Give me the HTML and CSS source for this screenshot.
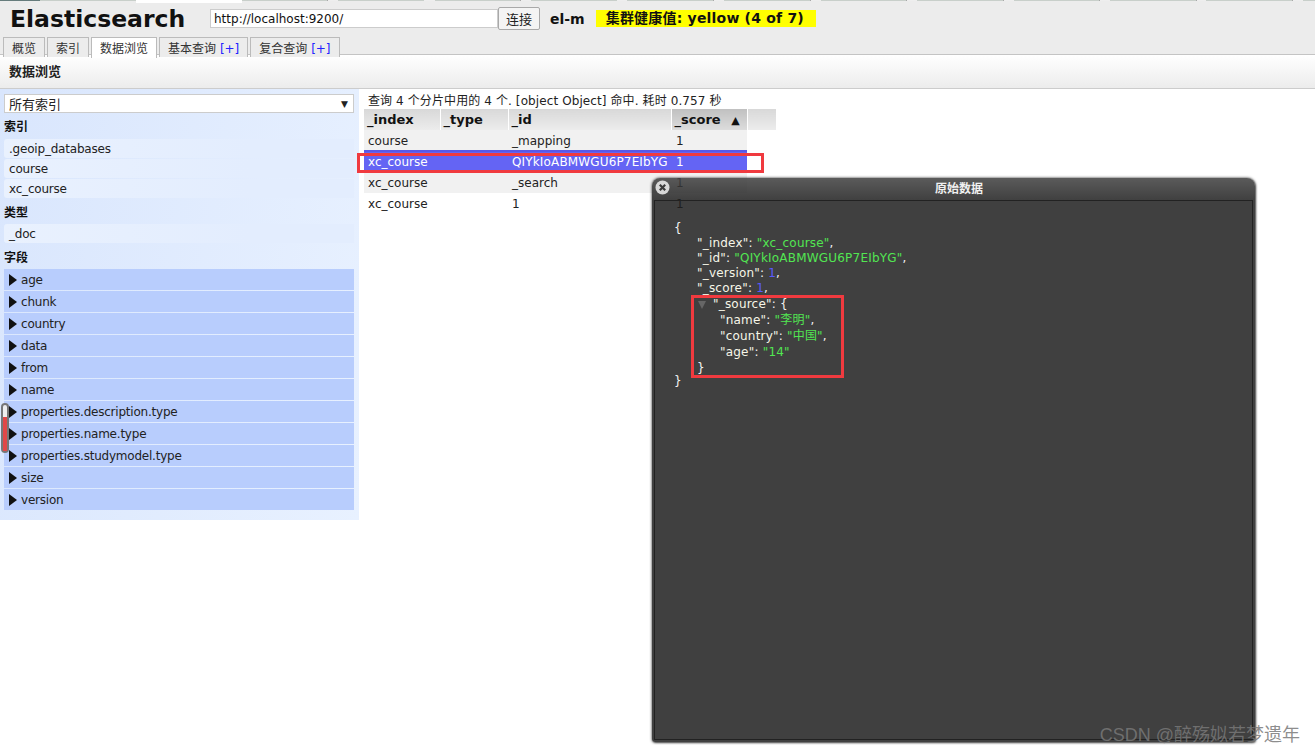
FILE: index.html
```html
<!DOCTYPE html>
<html lang="zh-CN">
<head>
  <meta charset="UTF-8" />
  <title>Elasticsearch</title>
  <link rel="stylesheet" href="styles.css">
</head>
<body>

  <div class="top-strip">
    <span class="strip-a"></span><span class="strip-b"></span><span class="strip-c"></span><span class="strip-d"></span>
  </div>

  <header class="header">
    <div class="header-row">
      <h1 class="brand">Elasticsearch</h1>
      <input class="uri-input" type="text" value="http://localhost:9200/" />
      <button class="connect-btn" type="button">连接</button>
      <span class="cluster-name">el-m</span>
      <span class="cluster-health">集群健康值: yellow (4 of 7)</span>
    </div>
    <nav class="tabs">
      <div class="tab">概览</div>
      <div class="tab">索引</div>
      <div class="tab active">数据浏览</div>
      <div class="tab">基本查询 <span class="plus">[+]</span></div>
      <div class="tab">复合查询 <span class="plus">[+]</span></div>
    </nav>
  </header>

  <div class="toolbar">数据浏览</div>

  <main class="browser">
    <aside class="filter">
      <div class="select">
        <span>所有索引</span>
        <span class="select-arrow">▼</span>
      </div>
      <h3 class="filter-title first">索引</h3>
      <div class="filter-item">.geoip_databases</div>
      <div class="filter-item">course</div>
      <div class="filter-item">xc_course</div>
      <h3 class="filter-title">类型</h3>
      <div class="filter-item">_doc</div>
      <h3 class="filter-title">字段</h3>
      <div class="field"><i class="arrow"></i>age</div>
      <div class="field"><i class="arrow"></i>chunk</div>
      <div class="field"><i class="arrow"></i>country</div>
      <div class="field"><i class="arrow"></i>data</div>
      <div class="field"><i class="arrow"></i>from</div>
      <div class="field"><i class="arrow"></i>name</div>
      <div class="field"><i class="arrow"></i>properties.description.type</div>
      <div class="field"><i class="arrow"></i>properties.name.type</div>
      <div class="field"><i class="arrow"></i>properties.studymodel.type</div>
      <div class="field"><i class="arrow"></i>size</div>
      <div class="field"><i class="arrow"></i>version</div>
    </aside>

    <section class="results">
      <div class="summary">查询 4 个分片中用的 4 个. [object Object] 命中. 耗时 0.757 秒</div>
      <table class="grid">
        <thead>
          <tr>
            <th class="col-index">_index</th>
            <th class="col-type">_type</th>
            <th class="col-id">_id</th>
            <th class="col-score sorted">_score <span class="sort">▲</span></th>
            <th class="col-extra"></th>
          </tr>
        </thead>
        <tbody>
          <tr class="odd"><td>course</td><td></td><td>_mapping</td><td>1</td></tr>
          <tr class="selected"><td>xc_course</td><td></td><td class="doc-id">QIYkIoABMWGU6P7EIbYG</td><td>1</td></tr>
          <tr class="odd"><td>xc_course</td><td></td><td>_search</td><td>1</td></tr>
          <tr><td>xc_course</td><td></td><td>1</td><td>1</td></tr>
        </tbody>
      </table>
    </section>
  </main>

  <div class="scroll-thumb"><span></span></div>

  <div class="dialog">
    <div class="dialog-head">
      <span class="dialog-close">
        <svg width="15" height="15" viewBox="0 0 15 15"><circle cx="7.5" cy="7.5" r="7" fill="#d8d8d8"/><path d="M4.8 4.8l5.4 5.4M10.2 4.8l-5.4 5.4" stroke="#3a3a3a" stroke-width="2.2"/></svg>
      </span>
      <span class="dialog-title">原始数据</span>
    </div>
    <div class="dialog-body">
      <div class="json">
        <div class="brace">{</div>
        <div class="props">
          <div class="line"><b>"_index"</b>: <em>"xc_course"</em>,</div>
          <div class="line"><b>"_id"</b>: <em>"QIYkIoABMWGU6P7EIbYG"</em>,</div>
          <div class="line"><b>"_version"</b>: <u>1</u>,</div>
          <div class="line"><b>"_score"</b>: <u>1</u>,</div>
          <div class="source">
            <div class="source-line"><i class="fold"></i><b>"_source"</b>: {</div>
            <div class="source-props">
              <div class="line"><b>"name"</b>: <em>"李明"</em>,</div>
              <div class="line"><b>"country"</b>: <em>"中国"</em>,</div>
              <div class="line"><b>"age"</b>: <em>"14"</em></div>
            </div>
            <div class="source-end">}</div>
          </div>
        </div>
        <div class="brace brace-end">}</div>
      </div>
    </div>
  </div>

  <!-- 红框标注 -->
  <div class="mark mark-row"></div>
  <div class="mark mark-source"></div>

  <div class="watermark">CSDN @醉殇姒若梦遗年</div>

</body>
</html>
```

FILE: styles.css
```css
* { box-sizing: border-box; }

html, body {
  margin: 0; padding: 0; height: 755px;
  background: #fff;
  font-family: "DejaVu Sans", "Noto Sans CJK SC", sans-serif;
  font-size: 12px;
  color: #111;
  overflow: hidden;
}

/* top strip */
.top-strip { display: flex; align-items: flex-start; height: 3px; background: #ececec; }
.top-strip span { display: block; height: 1px; }
.strip-a { width: 40px; background: #667c7c; }
.strip-b { width: 96px; background: #c8cfca; }
.top-strip .strip-c { width: 106px; height: 3px; background: #fff; }
.strip-d {
  flex: 1;
  background: repeating-linear-gradient(90deg, #c8cfca 0 85px, #a8a8a8 85px 86px, #eee 86px 96px, #c8cfca 96px 96.5px);
}

/* header */
.header { height: 52px; background: #ececec; border-bottom: 1px solid #c4c4c4; padding: 3px 0 0 3px; }
.header-row { display: flex; align-items: center; height: 25px; }
.brand { margin: 1px 0 0 7px; width: 200px; font-size: 23.5px; line-height: 25px; font-weight: bold; color: #111; }
.uri-input {
  width: 288px; height: 19px; padding: 0 3px;
  border: 1px solid #ccc; background: #fff;
  font: 12px "DejaVu Sans", sans-serif; color: #111;
}
.connect-btn {
  width: 42px; height: 23px; margin: 0; padding: 0;
  border: 1px solid #a9a9a9; border-radius: 2px; background: #f4f4f4;
  font: 13px "Noto Sans CJK SC", sans-serif; color: #222;
}
.cluster-name { margin-left: 10px; font-size: 14px; font-weight: bold; }
.cluster-health {
  margin-left: 11px; width: 220px; height: 17px; padding-left: 10px;
  background: #ff0; font-size: 14px; font-weight: bold; line-height: 17px; white-space: nowrap; letter-spacing: 0.2px;
}

.tabs { display: flex; align-items: flex-end; gap: 2px; height: 23px; margin-top: 3px; }
.tab {
  height: 20px; padding: 3px 8px 0;
  border: 1px solid #bbb; border-bottom: 0;
  background: #ececec; color: #333; font-size: 12px; line-height: 16px; white-space: nowrap;
}
.tab.active { height: 21px; background: #fff; margin-bottom: -1px; position: relative; }
.plus { color: #22f; }

.toolbar {
  height: 34px; padding: 0 9px; line-height: 34px;
  background: linear-gradient(#fff, #ececec);
  border-bottom: 1px solid #ccc;
  font-size: 13px; font-weight: bold; color: #222;
}

/* main */
.browser { display: flex; align-items: flex-start; }
.filter {
  width: 359px; height: 431px; padding: 5px 5px 0 4px;
  background: linear-gradient(100deg, #d9e6fd, #e8f1ff);
}
.select {
  display: flex; justify-content: space-between; align-items: center;
  height: 19px; padding: 0 5px 0 4px;
  background: #fff; border: 1px solid #ccc; color: #222; font-size: 13px;
}
.select-arrow { font-size: 9px; color: #222; }
.filter-title { margin: 0; height: 25px; font-size: 12px; line-height: 28px; font-weight: bold; color: #111; }
.filter-title.first { height: 26px; }
.filter-item {
  height: 19px; margin-bottom: 1px; padding-left: 5px; line-height: 20px; letter-spacing: -0.2px;
  background: linear-gradient(90deg, #e9f1fe, #e3edfe 70%); border-radius: 3px 0 0 3px; color: #222;
}
.field {
  display: flex; align-items: center; height: 21px; margin-bottom: 1px; padding-left: 5px;
  background: #b8cdfd; color: #222; letter-spacing: -0.22px;
}
.arrow { width: 0; height: 0; margin-right: 4px; border-left: 8px solid #111; border-top: 6.5px solid transparent; border-bottom: 6.5px solid transparent; }

.results { padding: 5px 0 0 5px; }
.summary { height: 15px; padding-left: 4px; line-height: 15px; color: #222; white-space: nowrap; letter-spacing: 0.1px; }
.grid { border-collapse: collapse; table-layout: fixed; width: 412px; }
.grid th {
  height: 21px; padding: 0 3px; text-align: left;
  background: linear-gradient(#d8d8d8, #ececec); border-right: 1px solid #fff;
  font-size: 13px; font-weight: bold; color: #111;
}
.grid th.sorted { background: linear-gradient(#c0c0c0, #dcdcdc); }
.col-index { width: 76px; }
.col-type { width: 68px; }
.col-id { width: 163px; }
.col-score { width: 76px; }
.col-extra { width: 29px; }
.sort { margin-left: 6px; font-size: 11px; }
.grid td { height: 21px; padding: 0 4px; white-space: nowrap; color: #222; }
.grid tbody tr:first-child td { padding-top: 1px; }
.grid tbody td:last-child { padding-left: 5px; }
.odd td { background: #f1f1f1; }
.selected td { background: #6464f4; color: #fff; border-top: 2px solid #5858e8; height: 21px; }
.grid .doc-id { letter-spacing: 0.15px; }

/* scrollbar thumb over the filter */
.scroll-thumb {
  position: absolute; left: 1px; top: 403px; width: 8px; height: 50px;
  border: 2px solid #777; border-radius: 4px; background: #eee; padding-top: 12px;
}
.scroll-thumb span { display: block; height: 34px; background: #e04848; }

/* dialog, see-through: the score column shows under it */
.dialog {
  position: absolute; left: 652px; top: 178px; width: 603px; height: 564px;
  background: rgba(31,31,31,0.85); border-radius: 8px 8px 3px 3px;
  box-shadow: 0 0 3px rgba(0,0,0,0.8), 1px 1px 2px rgba(0,0,0,0.5);
  display: flex; flex-direction: column;
}
.dialog-head {
  position: relative; height: 22px; flex: none; text-align: center;
  border-radius: 8px 8px 0 0;
  background: linear-gradient(rgba(255,255,255,0.14), rgba(255,255,255,0));
}
.dialog-close { position: absolute; left: 3px; top: 2px; line-height: 0; }
.dialog-title { padding-left: 11px; font-size: 12px; font-weight: bold; line-height: 23px; color: #f0f0f0; }
.dialog-body { flex: 1; margin: 0 2px 2px; border: 1px solid #222; padding: 20px 0 0 19px; position: relative; }

.json { color: #f4f4f4; font-size: 12px; line-height: 15px; letter-spacing: 0.2px; }
.json b { font-weight: normal; color: #f6f6e8; }
.json em { font-style: normal; color: #52e652; }
.json u { text-decoration: none; color: #5a5aff; }
.props { padding-left: 23px; }
.source { line-height: 16px; }
.source-line { position: relative; padding-left: 16px; }
.fold { position: absolute; left: 1px; top: 5px; width: 0; height: 0; border-top: 8px solid #666; border-left: 4px solid transparent; border-right: 4px solid transparent; }
.source-props { padding-left: 23px; }
.source-end { height: 15px; }
.brace-end { margin-top: -1px; }

/* annotation boxes */
.mark { position: absolute; border: 3px solid #f03a3f; }
.mark-row { left: 357px; top: 153px; width: 407px; height: 20px; }
.mark-source { left: 691px; top: 295px; width: 153px; height: 83px; }

.watermark {
  position: absolute; right: 15px; top: 724px;
  font-size: 18px; line-height: 22px; color: rgba(120,120,120,0.85);
  font-family: "Liberation Sans", "Noto Sans CJK SC", sans-serif;
}
```
